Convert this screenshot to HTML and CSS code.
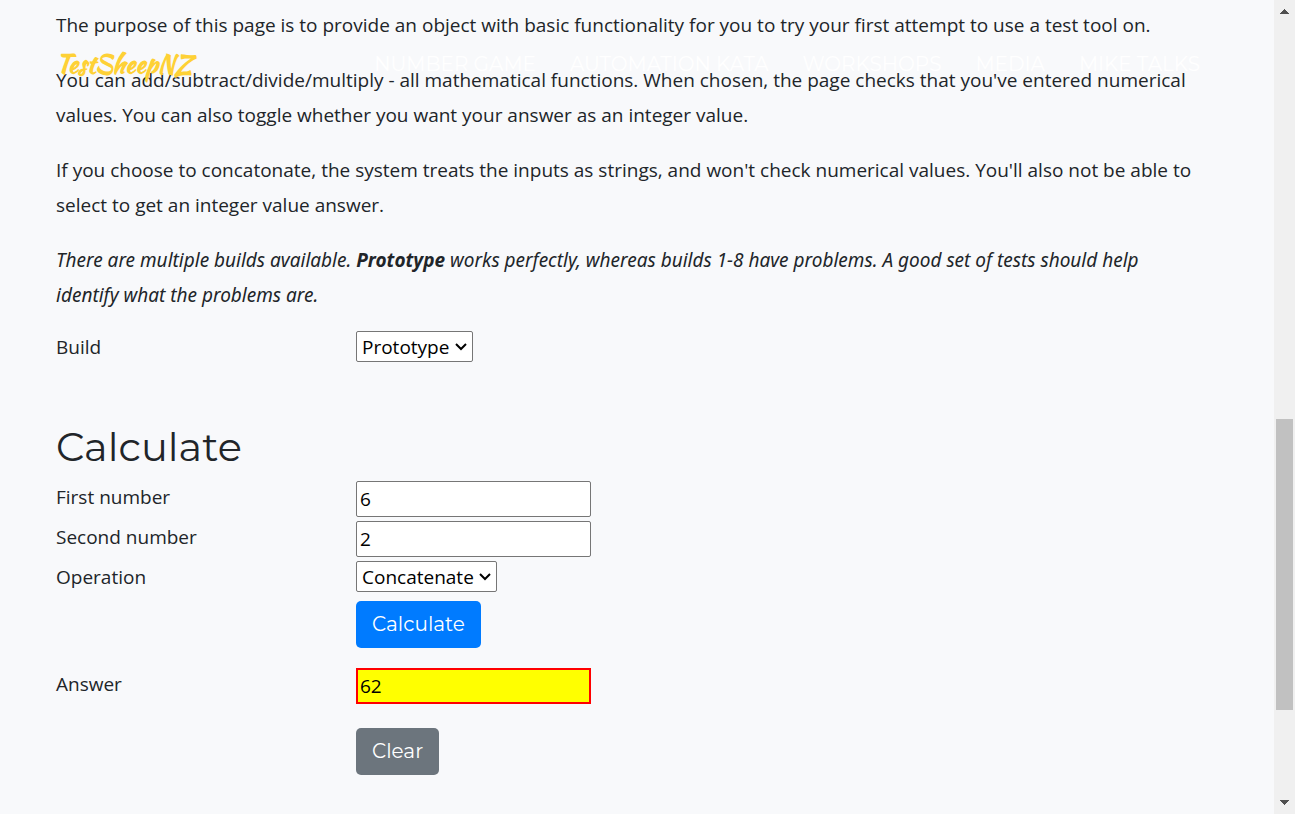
FILE: index.html
```html
<!DOCTYPE html>
<html lang="en">
<head>
<meta charset="utf-8">
<meta name="viewport" content="width=device-width, initial-scale=1">
<title>TestSheepNZ - Basic Calculator</title>
<link rel="stylesheet" href="styles.css">
</head>
<body>
<div class="window">
  <div class="page">
    <header class="navbar">
      <a class="brand" href="#">TestSheepNZ</a>
      <nav class="links">
        <a href="#">Number Game</a>
        <a href="#">Automation Kata</a>
        <a href="#">Workshops</a>
        <a href="#">Media</a>
        <a href="#">Mike Talks</a>
      </nav>
    </header>
    <main class="content">
      <p>The purpose of this page is to provide an object with basic functionality for you to try your first attempt to use a test tool on.</p>
      <p>You can add/subtract/divide/multiply - all mathematical functions. When chosen, the page checks that you've entered numerical values. You can also toggle whether you want your answer as an integer value.</p>
      <p>If you choose to concatonate, the system treats the inputs as strings, and won't check numerical values. You'll also not be able to select to get an integer value answer.</p>
      <p class="note">There are multiple builds available. <b>Prototype</b> works perfectly, whereas builds 1-8 have problems. A good set of tests should help identify what the problems are.</p>
      <form>
        <div class="row">
          <label for="build">Build</label>
          <div class="picker">
            <select id="build"><option>Prototype</option></select>
            <svg class="caret" viewBox="0 0 12 8" aria-hidden="true"><path d="M1 1l5 5 5-5"/></svg>
          </div>
        </div>
        <h2>Calculate</h2>
        <div class="row">
          <label for="first">First number</label>
          <input id="first" type="text" value="6">
        </div>
        <div class="row">
          <label for="second">Second number</label>
          <input id="second" type="text" value="2">
        </div>
        <div class="row">
          <label for="operation">Operation</label>
          <div class="picker">
            <select id="operation"><option>Concatenate</option></select>
            <svg class="caret" viewBox="0 0 12 8" aria-hidden="true"><path d="M1 1l5 5 5-5"/></svg>
          </div>
        </div>
        <div class="row actions">
          <button class="button primary" type="button">Calculate</button>
        </div>
        <div class="row answer">
          <label for="answer">Answer</label>
          <input id="answer" type="text" value="62" readonly>
        </div>
        <div class="row actions">
          <button class="button secondary" type="button">Clear</button>
        </div>
      </form>
    </main>
  </div>
  <div class="scrollbar" aria-hidden="true">
    <svg class="arrow" viewBox="0 0 9 5"><path d="M4 0h1v1h1v1h1v1h1v1h1v1H0V4h1V3h1V2h1V1h1z"/></svg>
    <div class="track"><div class="thumb"></div></div>
    <svg class="arrow" viewBox="0 0 9 5"><path d="M0 0h9v1H8v1H7v1H6v1H5v1H4V4H3V3H2V2H1V1H0z"/></svg>
  </div>
</div>
</body>
</html>
```
FILE: styles.css
```css
* {
  box-sizing: border-box;
}

body {
  margin: 0;
  background: #f8f9fb;
  color: #212529;
  font-family: "Open Sans", sans-serif;
  font-size: 19px;
  line-height: 35px;
}

.window {
  display: flex;
  min-height: 100vh;
}

.page {
  position: relative;
  flex: 1;
  min-width: 0;
  padding: 8px 56px 0;
}

.navbar {
  position: absolute;
  top: 47px;
  left: 56px;
  right: 74px;
  display: flex;
  justify-content: space-between;
  align-items: center;
}

.navbar a {
  text-decoration: none;
}

.brand {
  color: #fed136;
  font-family: "Kaushan Script", Lato, sans-serif;
  font-size: 25px;
  font-weight: 700;
}

.links {
  display: flex;
  gap: 34px;
  color: #fff;
  font-family: Montserrat, Inter, sans-serif;
  font-size: 20px;
  font-weight: 400;
  text-transform: uppercase;
}

.links a {
  color: inherit;
}

p {
  margin: 0 0 20px;
}

.note {
  margin-bottom: 17px;
  padding-right: 40px;
  font-family: "Noto Sans", "Open Sans", sans-serif;
  font-style: italic;
}

.row {
  display: grid;
  grid-template-columns: 300px 1fr;
  justify-items: start;
  align-items: start;
  min-height: 40px;
}

h2 {
  margin: 51px 0 7px;
  font-family: Montserrat, Inter, sans-serif;
  font-size: 40px;
  font-weight: 400;
  line-height: 52px;
}

input {
  width: 235px;
  height: 36px;
  margin-top: 1px;
  padding: 1px 3px;
  border: 1px solid #767676;
  border-radius: 2px;
  background: #fff;
  color: #000;
  font: inherit;
}

.picker {
  position: relative;
  margin-top: 1px;
}

select {
  display: block;
  height: 31px;
  padding: 2px 22px 0 5px;
  border: 1px solid #767676;
  border-radius: 2px;
  appearance: none;
  background: #fff;
  color: #000;
  font: inherit;
  line-height: 27px;
}

.caret {
  position: absolute;
  top: 12px;
  right: 6px;
  width: 12px;
  height: 8px;
  fill: none;
  stroke: #000;
  stroke-width: 2;
  pointer-events: none;
}

.actions {
  min-height: 67px;
}

.button {
  grid-column: 2;
  height: 47px;
  margin-top: 1px;
  padding: 0 16px 2px;
  border: 0;
  border-radius: 5px;
  color: #fff;
  font-family: Montserrat, Inter, sans-serif;
  font-size: 20px;
}

.primary {
  background: #007bff;
}

.secondary {
  background: #6c757d;
}

.answer {
  min-height: 60px;
}

.answer input {
  padding: 1px 2px;
  border: 2px solid #f00;
  border-radius: 0;
  background: #ff0;
}

.scrollbar {
  display: flex;
  flex-direction: column;
  align-items: center;
  width: 21px;
  padding: 9px 2px;
  background: #f0f0f0;
}

.arrow {
  width: 9px;
  height: 5px;
  fill: #505050;
}

.track {
  flex: 1;
  width: 17px;
  padding-top: 405px;
}

.thumb {
  height: 291px;
  background: #c1c1c1;
}
```
